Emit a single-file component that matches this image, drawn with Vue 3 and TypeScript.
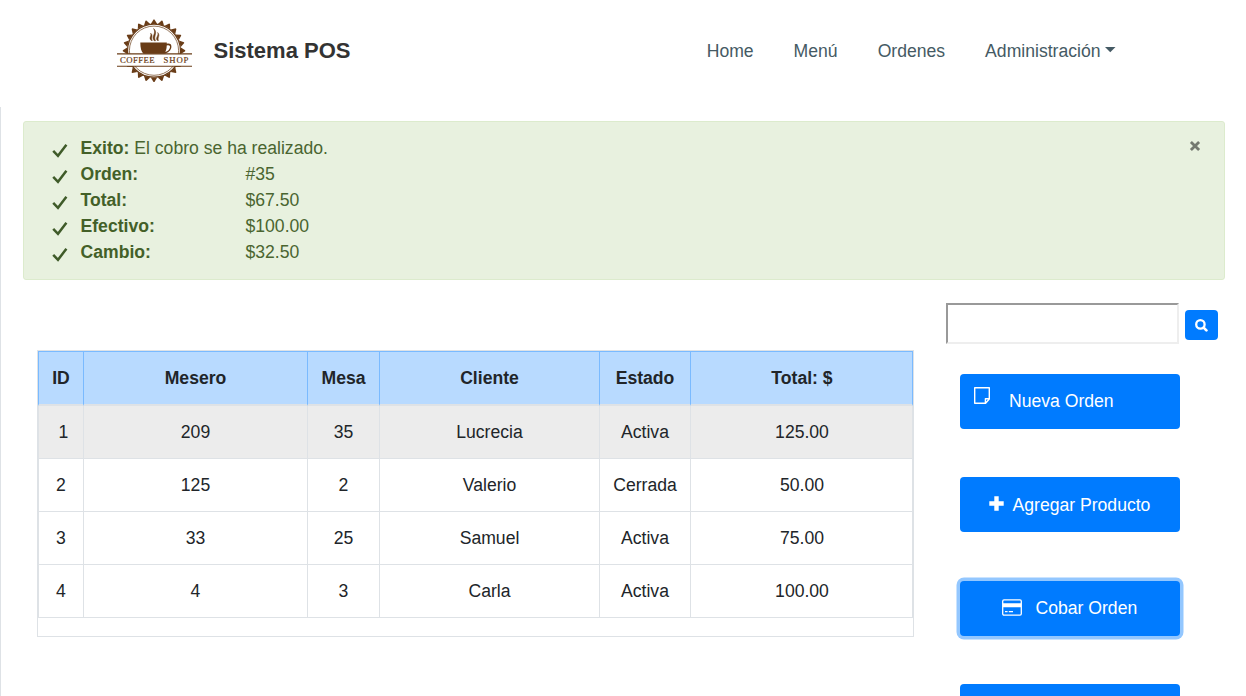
<script setup lang="ts">
interface Detail { label: string; value: string }
interface Order { id: number; mesero: number; mesa: number; cliente: string; estado: string; total: string }

const links: string[] = ['Home', 'Menú', 'Ordenes']
const details: Detail[] = [
  { label: 'Orden:', value: '#35' },
  { label: 'Total:', value: '$67.50' },
  { label: 'Efectivo:', value: '$100.00' },
  { label: 'Cambio:', value: '$32.50' },
]
const columns: string[] = ['ID', 'Mesero', 'Mesa', 'Cliente', 'Estado', 'Total: $']
const orders: Order[] = [
  { id: 1, mesero: 209, mesa: 35, cliente: 'Lucrecia', estado: 'Activa', total: '125.00' },
  { id: 2, mesero: 125, mesa: 2, cliente: 'Valerio', estado: 'Cerrada', total: '50.00' },
  { id: 3, mesero: 33, mesa: 25, cliente: 'Samuel', estado: 'Activa', total: '75.00' },
  { id: 4, mesero: 4, mesa: 3, cliente: 'Carla', estado: 'Activa', total: '100.00' },
]

// Badge teeth: 24 triangles around the seal
const teeth: string[] = Array.from({ length: 24 }, (_, i) => {
  const point = (angle: number, r: number) =>
    `${(38 + r * Math.sin(angle)).toFixed(2)},${(31.7 - r * Math.cos(angle)).toFixed(2)}`
  const a = (i * Math.PI) / 12
  const half = Math.PI / 26
  return [point(a - half, 27), point(a - 0.015, 31.2), point(a + 0.015, 31.2), point(a + half, 27)].join(' ')
})
</script>

<template>
  <div class="page">
    <header class="navbar">
      <a class="brand">
        <svg class="logo" width="76" height="64" viewBox="0 0 76 64">
          <g fill="#693c17">
            <polygon v-for="(t, i) in teeth" :key="i" :points="t" />
          </g>
          <circle cx="38" cy="31.700" r="26.500" fill="#fff" stroke="#693c17" stroke-width="1.300" />
          <circle cx="38" cy="31.700" r="24.600" fill="none" stroke="#693c17" stroke-width=".7" />
          <path d="M24.300 23.500h26.500v1.300c2.900-.7 4.900.5 4.600 3.100-.3 3.400-3.300 5.900-7 6.800H27.600c-2.300-2-3.300-5.600-3.300-11.200z" fill="#693c17" />
          <path d="M50.700 26.600c2.200-.7 3.500 0 3.300 1.600-.3 2.200-2.100 3.900-4.700 4.800.9-1.900 1.400-3.900 1.400-6.400z" fill="#fff" />
          <path d="M35.200 21.500c-3-3 .8-4.300-.6-7.300 3 2.300 0 4.300 1.700 7.300zM38.200 21.800c-3.500-4.800 2.600-6.800-.6-12.300 4.800 4.500-.6 7.300 1.900 12.300zM41.300 21.500c-2.300-3 1.800-4.600.4-8 2.800 3.400-.6 4.800.8 8z" fill="#693c17" stroke="#693c17" stroke-width=".5" />
          <rect y="35" width="76" height="12" fill="#fff" />
          <path d="M1 34.900h75M1 47.300h75" stroke="#693c17" stroke-width="1.100" />
          <text x="4" y="43.700" class="logo-text coffee">COFFEE</text>
          <text x="47.500" y="43.700" class="logo-text shop">SHOP</text>
        </svg>
        <span class="brand-name">Sistema POS</span>
      </a>
      <nav class="links">
        <a v-for="link in links" :key="link">{{ link }}</a>
        <a class="dropdown">Administración<svg class="caret" width="11" height="6" viewBox="0 0 11 6"><path d="M0 0h10.500L5.250 5.300z" fill="currentColor" /></svg></a>
      </nav>
    </header>

    <main class="content">
      <section class="alert">
        <ul class="messages">
          <li>
            <svg class="check" width="16" height="15" viewBox="0 0 16 15"><path d="M1.200 7.800l4.800 5L14.400 1.800" /></svg>
            <span><b>Exito:</b> El cobro se ha realizado.</span>
          </li>
          <li v-for="d in details" :key="d.label">
            <svg class="check" width="16" height="15" viewBox="0 0 16 15"><path d="M1.200 7.800l4.800 5L14.400 1.800" /></svg>
            <b class="label">{{ d.label }}</b><span>{{ d.value }}</span>
          </li>
        </ul>
        <button class="close" aria-label="Cerrar">
          <svg width="10" height="10" viewBox="0 0 10 10"><path d="M.900.900l8.200 8.200M9.100.900L.900 9.100" /></svg>
        </button>
      </section>

      <div class="body">
        <section class="table-box">
          <table>
            <colgroup>
              <col class="c-id" /><col class="c-mesero" /><col class="c-mesa" />
              <col class="c-cliente" /><col class="c-estado" /><col class="c-total" />
            </colgroup>
            <thead>
              <tr><th v-for="c in columns" :key="c">{{ c }}</th></tr>
            </thead>
            <tbody>
              <tr v-for="o in orders" :key="o.id" :class="{ hover: o.id === 1 }">
                <td>{{ o.id }}</td><td>{{ o.mesero }}</td><td>{{ o.mesa }}</td>
                <td>{{ o.cliente }}</td><td>{{ o.estado }}</td><td>{{ o.total }}</td>
              </tr>
            </tbody>
          </table>
        </section>

        <aside class="side">
          <div class="search">
            <input type="text" />
            <button aria-label="Buscar">
              <svg width="13" height="13" viewBox="0 0 13 13"><circle cx="5.400" cy="5.400" r="4.200" stroke-width="2.300" /><path d="M8.600 8.600l2.800 2.800" stroke-width="2.700" stroke-linecap="round" /></svg>
            </button>
          </div>
          <div class="actions">
            <button class="action note">
              <svg width="16" height="17" viewBox="0 0 16 17"><path d="M.700.700h14.600v11.300l-3.700 4.200H.700zM15.300 11.700h-3.900v4.500" fill="none" stroke="#fff" stroke-width="1.400" stroke-linejoin="round" /></svg>
              <span>Nueva Orden</span>
            </button>
            <button class="action add">
              <svg width="15" height="15" viewBox="0 0 15 15"><path d="M7.500 2.500v10M2.500 7.500h10" stroke="#fff" stroke-width="4.400" stroke-linecap="square" /></svg>
              <span>Agregar Producto</span>
            </button>
            <button class="action pay">
              <svg width="20" height="17" viewBox="0 0 20 17"><rect x=".700" y=".900" width="18.600" height="15.200" rx="1.300" fill="none" stroke="#fff" stroke-width="1.300" /><path d="M1 4.200h18v4H1zM3 12h2.600v1.300H3zM6.800 12h4.200v1.300H6.800z" fill="#fff" /></svg>
              <span>Cobar Orden</span>
            </button>
            <button class="action"></button>
          </div>
        </aside>
      </div>
    </main>
  </div>
</template>

<style>
html, body { background: #fff; overflow: hidden; }
</style>

<style scoped>
* { box-sizing: border-box; }
.page { width: 1246px; height: 696px; overflow: hidden; font: 17.600px/26px "Liberation Sans", Arial, sans-serif; color: #212529; }
button { font: inherit; padding: 0; border: 0; color: #fff; }
svg { display: block; flex: none; }
.navbar { height: 107px; padding: 0 130px 6px 116px; display: flex; align-items: center; justify-content: space-between; }
.brand { display: flex; align-items: center; gap: 21.500px; }
.brand-name { font-size: 22px; font-weight: 700; color: #333; }
.logo-text { font: 8.700px "Liberation Serif", serif; fill: #693c17; stroke: #693c17; stroke-width: .2px; }
.coffee { letter-spacing: .45px; }
.shop { letter-spacing: .900px; }
.links { display: flex; gap: 40px; color: #455a64; }
.dropdown { display: flex; align-items: center; }
.caret { margin: -2px 0 0 4.500px; }
.content { height: 589px; border-left: 1px solid #dee2e6; padding: 14px 21px 0 22px; }
.alert { height: 159px; background: #e8f1df; border: 1px solid #dcebcd; border-radius: 3px; color: #4a6530; display: flex; justify-content: space-between; padding: 13px 24px 0 28px; }
.messages { list-style: none; margin: 0; padding: 0; }
.messages li { display: flex; align-items: center; height: 26px; }
.messages b { color: #436028; }
.check { margin: 4px 12.500px 0 0; }
.check path { fill: none; stroke: #3f5b29; stroke-width: 2.500; }
.label { width: 165px; }
.close { width: 10px; height: 10px; margin-top: 5.500px; background: none; }
.close svg { overflow: visible; }
.close path { stroke: #747970; stroke-width: 2.800; }
.body { display: flex; padding: 23px 0 0 14px; }
.table-box { width: 877px; height: 287px; margin-top: 47px; border: 1px solid #dee2e6; }
table { width: 875px; table-layout: fixed; border-collapse: separate; border-spacing: 0; text-align: center; }
.c-id { width: 46px; }
.c-mesero { width: 224px; }
.c-mesa { width: 72px; }
.c-cliente { width: 220px; }
.c-estado { width: 91px; }
.c-total { width: 222px; }
th, td { padding: 0; border-right: 1px solid #dee2e6; border-bottom: 1px solid #dee2e6; }
th { height: 55px; background: #b8daff; border-top: 1px solid #7abaff; border-right-color: #7abaff; border-bottom-width: 2px; }
td { height: 53px; }
th:first-child { border-left: 1px solid #7abaff; }
td:first-child { border-left: 1px solid #dee2e6; }
th:last-child, td:last-child { padding-left: 1px; }
.hover { background: #ececec; }
.hover td:first-child { padding-left: 5px; }
.side { margin-left: 32px; }
.search { display: flex; align-items: center; gap: 6px; }
.search input { width: 233px; height: 41px; padding: 0; border: 2px solid; border-color: #999 #eee #eee #999; background: #fff; }
.search button { width: 33px; height: 30px; margin-top: 3px; border-radius: 4px; background: #007bff; display: flex; align-items: center; justify-content: center; }
.search svg { fill: none; stroke: #fff; }
.actions { display: flex; flex-direction: column; gap: 48.330px; margin: 30px 0 0 14px; }
.action { width: 220px; height: 55px; border-radius: 4px; background: #007bff; display: flex; align-items: center; padding-bottom: 2px; }
.note { padding-left: 14px; gap: 19px; }
.note svg { margin-bottom: 10px; }
.add { padding-left: 29px; gap: 8.500px; padding-bottom: 0; }
.add svg { margin-bottom: 2px; }
.pay { padding-left: 42px; gap: 13.500px; padding-bottom: 1px; box-shadow: 0 0 0 3.500px #93c7ff; }
</style>
